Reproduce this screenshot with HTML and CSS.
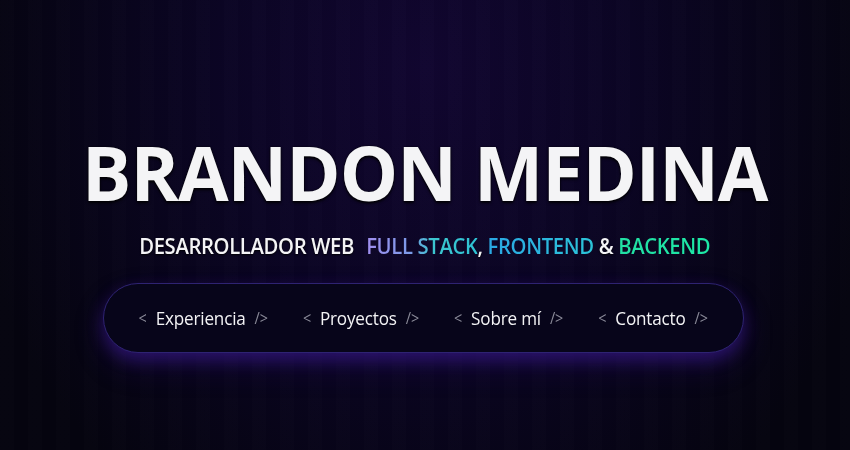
FILE: index.html
```html
<!DOCTYPE html>
<html lang="es">
<head>
<meta charset="utf-8">
<title>Brandon Medina</title>
<link rel="stylesheet" href="styles.css">
</head>
<body>
<main class="hero">
  <h1 class="name">BRANDON MEDINA</h1>
  <p class="role">DESARROLLADOR WEB <span class="grad-full">FULL STACK</span>, <span class="grad-front">FRONTEND</span> &amp; <span class="grad-back">BACKEND</span></p>
  <nav class="nav">
    <div class="nav-links">
      <a class="nav-item" href="#"><span class="tag">&lt;</span><span>Experiencia</span><span class="tag">/&gt;</span></a>
      <a class="nav-item" href="#"><span class="tag">&lt;</span><span>Proyectos</span><span class="tag">/&gt;</span></a>
      <a class="nav-item" href="#"><span class="tag">&lt;</span><span>Sobre mí</span><span class="tag">/&gt;</span></a>
      <a class="nav-item" href="#"><span class="tag">&lt;</span><span>Contacto</span><span class="tag">/&gt;</span></a>
    </div>
  </nav>
</main>
</body>
</html>
```

FILE: styles.css
```css
* { box-sizing: border-box; }
html, body { height: 100%; }
body {
  margin: 0;
  font-family: "Open Sans", "Noto Sans", sans-serif;
  color: #f4f4f6;
  background:
    repeating-linear-gradient(90deg, rgba(255,255,255,0.006) 0 14px, rgba(0,0,0,0.015) 14px 28px),
    radial-gradient(ellipse 55% 120% at 50% 15%, #110630 0%, #0b0524 45%, #05040f 100%);
  background-color: #05040f;
  overflow: hidden;
}
.hero {
  height: 450px;
  display: flex;
  flex-direction: column;
  align-items: center;
  padding-top: 125px;
}
.name {
  margin: 0;
  font-size: 76px;
  font-weight: 700;
  line-height: 94px;
  letter-spacing: -1px;
  transform: scaleX(0.966);
  white-space: nowrap;
  text-shadow: 0 2px 3px rgba(0,0,0,0.9), 0 0 2px rgba(0,0,0,0.8);
}
.role {
  margin: 11px 0 0;
  font-size: 22px;
  font-weight: 600;
  line-height: 30px;
  letter-spacing: -0.4px;
  transform: scaleX(0.922);
  white-space: nowrap;
  text-shadow: 0 1px 2px rgba(0,0,0,0.9);
}
.grad-full, .grad-front, .grad-back {
  -webkit-background-clip: text;
  background-clip: text;
  color: transparent;
  text-shadow: none;
}
.grad-full { background-image: linear-gradient(90deg, #a18ff0 0%, #7b9ae8 40%, #3cc6cf 60%, #2fc2d4 100%); margin-left: 8px; }
.grad-front { background-image: linear-gradient(90deg, #2aa8e4, #2cc4d8); }
.grad-back { background-image: linear-gradient(90deg, #22e0a4, #1de8a6); }
.nav {
  margin-top: 23px;
  margin-right: 3px;
  width: 641px;
  height: 70px;
  border-radius: 35px;
  border: 1px solid #2e2372;
  background: #07051a;
  box-shadow: 0 7px 16px rgba(70, 30, 170, 0.45), 0 14px 30px rgba(50, 20, 140, 0.25);
  display: flex;
  justify-content: center;
  align-items: center;
}
.nav-links {
  display: flex;
  align-items: center;
  gap: 39px;
  transform: scaleX(0.9);
  white-space: nowrap;
}
.nav-item {
  color: #f3f3f5;
  text-decoration: none;
  font-size: 19px;
  letter-spacing: -0.2px;
  display: flex;
  align-items: center;
  gap: 10px;
}
.tag {
  color: #8a8a98;
  font-size: 16px;
}
```
